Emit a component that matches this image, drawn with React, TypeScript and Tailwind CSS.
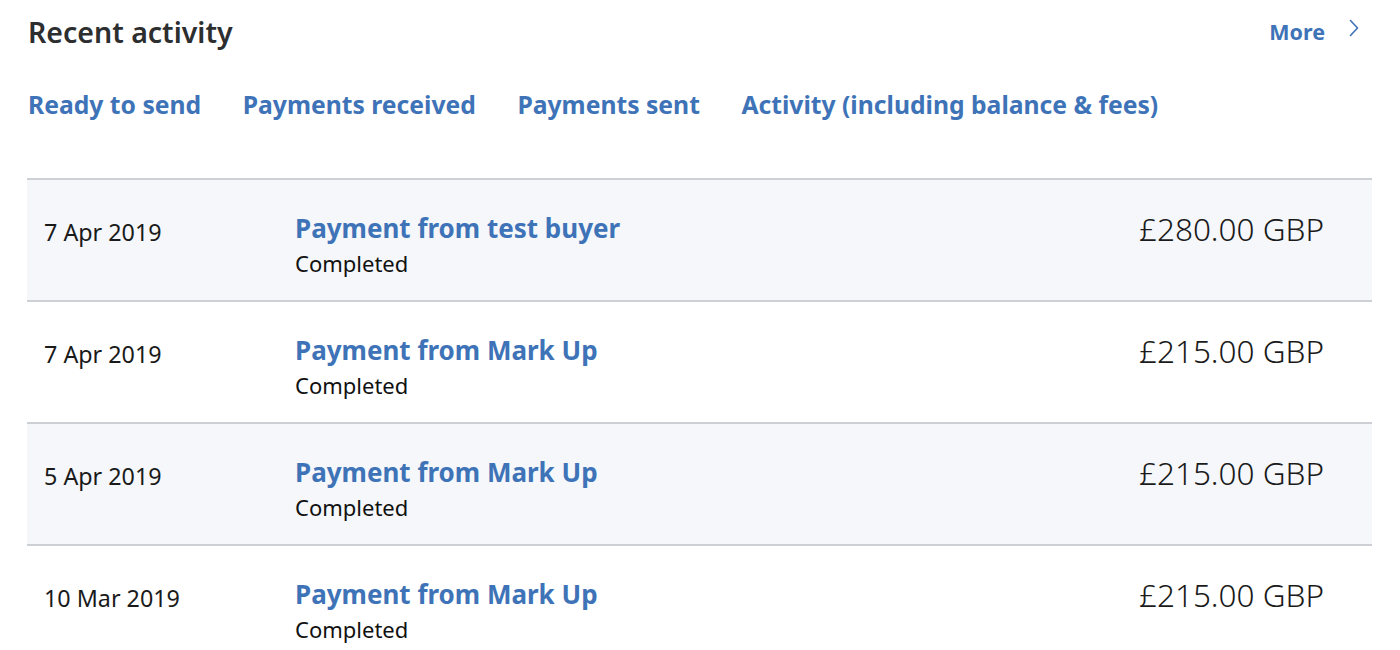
const rows = [
  { date: "7 Apr 2019", title: "Payment from test buyer", status: "Completed", amount: "£280.00 GBP" },
  { date: "7 Apr 2019", title: "Payment from Mark Up", status: "Completed", amount: "£215.00 GBP" },
  { date: "5 Apr 2019", title: "Payment from Mark Up", status: "Completed", amount: "£215.00 GBP" },
  { date: "10 Mar 2019", title: "Payment from Mark Up", status: "Completed", amount: "£215.00 GBP" },
];

const tabs = ["Ready to send", "Payments received", "Payments sent", "Activity (including balance & fees)"];

export default function App() {
  return (
    <div
      className="min-h-screen bg-white pl-[27px] pr-[28px] pt-[12px]"
      style={{ fontFamily: '"Noto Sans", "Open Sans", sans-serif' }}
    >
      {/* Header */}
      <div className="flex items-start justify-between">
        <h2 className="text-[28.5px] font-semibold leading-[40px] text-[#2c2e2f] pl-px">Recent activity</h2>
        <a href="#" className="flex items-start gap-[24px] pr-[13px] pt-[4px] text-[21.5px] font-bold leading-[32px] text-[#3e73b8]">
          More
          <svg width="10" height="18" viewBox="0 0 10 18" className="mt-[3px]" fill="none">
            <path d="M1.5 1.5 L8.5 9 L1.5 16.5" stroke="#3e73b8" strokeWidth="1.6" strokeLinecap="round" strokeLinejoin="round" />
          </svg>
        </a>
      </div>

      {/* Tabs */}
      <div className="mt-[36px] flex items-center gap-[41.5px] pl-px">
        {tabs.map((t) => (
          <a key={t} href="#" className="text-[24.7px] font-bold leading-[34px] text-[#3e73b8]">
            {t}
          </a>
        ))}
      </div>

      {/* Activity list */}
      <div className="mt-[56px] border-t-2 border-[#cdd1d5]">
        {rows.map((r, i) => (
          <div
            key={i}
            className={`flex items-start border-b-2 border-[#cdd1d5] h-[122px] ${i % 2 === 0 ? "bg-[#f5f7fa]" : "bg-white"}`}
          >
            <div className="w-[268px] pl-[17px] pt-[35px] text-[23.3px] leading-[34px] text-[#1a1a1a]">{r.date}</div>
            <div className="flex-1 pt-[31px]">
              <div className="text-[26px] font-bold leading-[34px] text-[#3e73b8]">{r.title}</div>
              <div className="text-[22px] leading-[36px] text-[#111]">{r.status}</div>
            </div>
            <div className="pr-[48px] pt-[27px] text-[31.5px] font-light leading-[44px] text-[#1a1a1a]">{r.amount}</div>
          </div>
        ))}
      </div>
    </div>
  );
}
